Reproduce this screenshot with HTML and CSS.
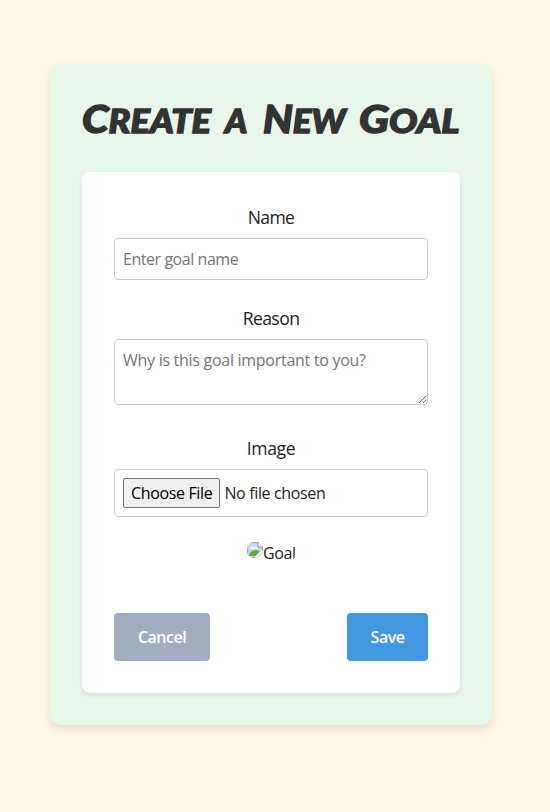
FILE: index.html
```html
<!DOCTYPE html>
<html lang="en">
<head>
<meta charset="utf-8">
<title>Create a New Goal</title>
<link rel="stylesheet" href="styles.css">
</head>
<body>
<main class="card">
  <h1 class="title"><span class="word create">Create</span> <span class="word a">a</span> <span class="word new">New</span> <span class="word goal">Goal</span></h1>
  <form class="form">
    <label class="label name-label" for="name">Name</label>
    <input class="field name" id="name" type="text" placeholder="Enter goal name">
    <label class="label reason-label" for="reason">Reason</label>
    <textarea class="field reason" id="reason" placeholder="Why is this goal important to you?"></textarea>
    <label class="label" for="image">Image</label>
    <input class="field file" id="image" type="file">
    <div class="preview">
      <svg width="16" height="16" viewBox="0 0 16 16" aria-hidden="true">
        <path d="M.5.500h10.500l4.500 4.500v10.500H.5z" fill="#c3d5f5" stroke="#a0a4ab"/>
        <path d="M3 6c0-2 3-3 4-1 2-1 4 0 4 2H3z" fill="#e8effc"/>
        <path d="M1 14c2-4 5-6 8-6 3 0 5 2 6 6z" fill="#53ad36"/>
        <path d="M11 .5v4.500h4.500" fill="#fff" stroke="#8d9299"/>
        <path d="M10 16l6-6v6z" fill="#fff"/>
        <path d="M8.500 15.500l7-7" stroke="#fff" stroke-width="2"/>
      </svg><span>Goal</span>
    </div>
    <div class="actions">
      <button class="btn cancel" type="button">Cancel</button>
      <button class="btn save" type="button">Save</button>
    </div>
  </form>
</main>
</body>
</html>
```
FILE: styles.css
```css
* { box-sizing: border-box; }
body {
  margin: 0;
  min-height: 812px;
  padding: 64px 58px 0 50px;
  background: #fff7e6;
  color: #222;
  font-family: "Open Sans", "Noto Sans", sans-serif;
  font-size: 16px;
}
.card {
  width: 442px;
  height: 661px;
  padding: 32px;
  background: #e7f7ec;
  border-radius: 10px;
  box-shadow: 0 4px 8px rgba(0, 0, 0, .1);
}
.title {
  display: flex;
  align-items: baseline;
  gap: 14px;
  height: 44px;
  margin: 0 0 32px;
  color: #333;
  font-family: Lato, "Open Sans", sans-serif;
  font-size: 32px;
  font-weight: 900;
  font-style: italic;
  line-height: 44px;
  text-transform: uppercase;
  white-space: nowrap;
  -webkit-text-stroke: 1.4px #333;
  paint-order: stroke fill;
  stroke-linejoin: round;
}
.word { display: block; flex: none; transform-origin: 0 50%; }
.word::first-letter { font-size: 38px; }
.create { width: 129px; transform: scaleX(1.13); }
.a { width: 24px; transform: scaleX(1.06); }
.a::first-letter { font-size: 32px; }
.new { width: 82px; transform: scaleX(1.09); }
.goal { width: 101px; transform: scaleX(1.17); }
.form {
  display: flex;
  flex-direction: column;
  height: 521px;
  padding: 32px;
  background: #fff;
  border-radius: 8px;
  box-shadow: 0 2px 4px rgba(0, 0, 0, .1);
}
.label {
  height: 26px;
  margin-bottom: 8px;
  font-size: 17.6px;
  line-height: 27px;
  letter-spacing: -.35px;
  text-align: center;
}
.name-label { letter-spacing: -.7px; }
.reason-label { letter-spacing: -.6px; line-height: 26px; }
.field {
  width: 100%;
  padding: 8px;
  background: #fff;
  border: 1px solid #ccc;
  border-radius: 4px;
  color: #222;
  font: inherit;
  letter-spacing: -.35px;
}
.field::placeholder { color: #757575; opacity: 1; }
.name { height: 42px; margin-bottom: 25px; letter-spacing: -.45px; }
.reason { height: 66px; margin-bottom: 30px; line-height: 24px; letter-spacing: -.28px; }
.file { height: 48px; margin-bottom: 24px; }
.file::file-selector-button {
  height: 30px;
  margin: 0 4px 0 0;
  padding: 1px 7px;
  background: #efefef;
  border: 1px solid #767676;
  border-radius: 2px;
  color: #000;
  font: inherit;
  letter-spacing: inherit;
}
.preview {
  display: flex;
  align-self: center;
  width: 48px;
  height: 22px;
  overflow: hidden;
  border-radius: 8px;
  line-height: 24px;
  letter-spacing: -.35px;
}
.preview svg { flex: none; margin-top: 1px; border-radius: 7px 0 0 7px; }
.actions { display: flex; justify-content: space-between; margin-top: auto; }
.btn {
  height: 48px;
  padding: 0;
  border: 0;
  border-radius: 4px;
  color: #fff;
  font: 600 16px "Open Sans", "Noto Sans", sans-serif;
  letter-spacing: -.5px;
}
.cancel { width: 96px; background: #a0aec0; }
.save { width: 81px; background: #4299e1; }
```
